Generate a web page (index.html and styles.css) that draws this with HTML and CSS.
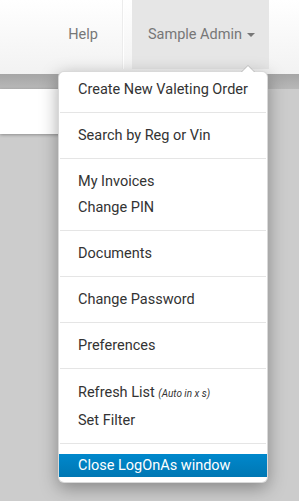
FILE: index.html
```html
<!DOCTYPE html>
<html lang="en">
<head>
  <meta charset="UTF-8" />
  <meta name="viewport" content="width=device-width, initial-scale=1.0" />
  <title>Valeting</title>
  <link rel="stylesheet" href="styles.css">
</head>
<body>
  <div class="navbar">
    <ul class="nav">
      <li><a class="nav-link" href="#">Help</a></li>
      <li class="divider-vertical"></li>
      <li class="dropdown">
        <a class="nav-link active" href="#">Sample Admin<b class="caret"></b></a>
        <ul class="dropdown-menu">
          <li><a href="#">Create New Valeting Order</a></li>
          <li class="divider"></li>
          <li><a href="#">Search by Reg or Vin</a></li>
          <li class="divider"></li>
          <li><a href="#">My Invoices</a></li>
          <li><a href="#">Change PIN</a></li>
          <li class="divider"></li>
          <li><a href="#">Documents</a></li>
          <li class="divider"></li>
          <li><a href="#">Change Password</a></li>
          <li class="divider"></li>
          <li><a href="#">Preferences</a></li>
          <li class="divider"></li>
          <li><a class="refresh" href="#">Refresh List <small>(Auto in x s)</small></a></li>
          <li><a href="#">Set Filter</a></li>
          <li class="divider"></li>
          <li><a class="highlight" href="#">Close LogOnAs window</a></li>
        </ul>
      </li>
    </ul>
  </div>

  <div class="page">
    <div class="panel"></div>
  </div>
</body>
</html>
```

FILE: styles.css
```css
* {
  margin: 0;
  padding: 0;
  box-sizing: border-box;
}

body {
  font-family: Roboto, "Liberation Sans", sans-serif;
  background: #cccccc;
  color: #333;
  min-height: 100vh;
}

ul {
  list-style: none;
}

a {
  text-decoration: none;
}

.navbar {
  height: 74px;
  background: linear-gradient(to bottom, #ffffff, #f2f2f2);
  display: flex;
  justify-content: flex-end;
  padding-right: 30px;
  position: relative;
  z-index: 2;
}

.nav {
  display: flex;
  align-items: flex-start;
  height: 69px;
}

.nav-link {
  display: flex;
  align-items: center;
  height: 69px;
  padding: 0 24px 0 0;
  font-size: 14.5px;
  color: #777;
}

.nav-link.active {
  background: #e6e6e6;
  padding: 0 14px 0 16px;
}

.divider-vertical {
  width: 2px;
  height: 69px;
  margin-right: 8px;
  border-left: 1px solid #ececec;
  border-right: 1px solid #ffffff;
}

.caret {
  display: inline-block;
  margin-left: 5px;
  border-top: 4px solid #777;
  border-left: 4px solid transparent;
  border-right: 4px solid transparent;
}

.dropdown {
  position: relative;
}

.dropdown-menu {
  position: absolute;
  top: 71px;
  right: 1px;
  width: 210px;
  padding: 5px 0;
  background: #fff;
  border: 1px solid rgba(0, 0, 0, 0.15);
  border-radius: 6px;
  box-shadow: 0 5px 18px rgba(0, 0, 0, 0.35);
}

.dropdown-menu::before,
.dropdown-menu::after {
  content: "";
  position: absolute;
  border-left: 7px solid transparent;
  border-right: 7px solid transparent;
}

.dropdown-menu::before {
  top: -7px;
  right: 12px;
  border-bottom: 7px solid rgba(0, 0, 0, 0.15);
}

.dropdown-menu::after {
  top: -6px;
  right: 13px;
  border-left-width: 6px;
  border-right-width: 6px;
  border-bottom: 6px solid #fff;
}

.dropdown-menu a {
  display: block;
  padding: 3px 19px;
  line-height: 20px;
  font-size: 14.5px;
  color: #333;
  white-space: nowrap;
}

.dropdown-menu .refresh {
  padding: 4px 19px;
}

.refresh small {
  font-size: 10px;
  font-style: italic;
}

.dropdown-menu .highlight {
  padding: 2px 19px 1px;
  color: #fff;
  background: linear-gradient(to bottom, #0088cc, #0077b3);
}

.divider {
  box-sizing: content-box;
  height: 1px;
  margin: 9px 1px;
  background: #e5e5e5;
  border-bottom: 1px solid #fff;
}

.page {
  background: linear-gradient(to bottom, #a6a6a6, #b8b8b8 15px, #cccccc 15px);
  padding-top: 15px;
}

.panel {
  width: 250px;
  height: 45px;
  background: #fff;
  box-shadow: 0 1px 3px rgba(0, 0, 0, 0.3);
}
```
